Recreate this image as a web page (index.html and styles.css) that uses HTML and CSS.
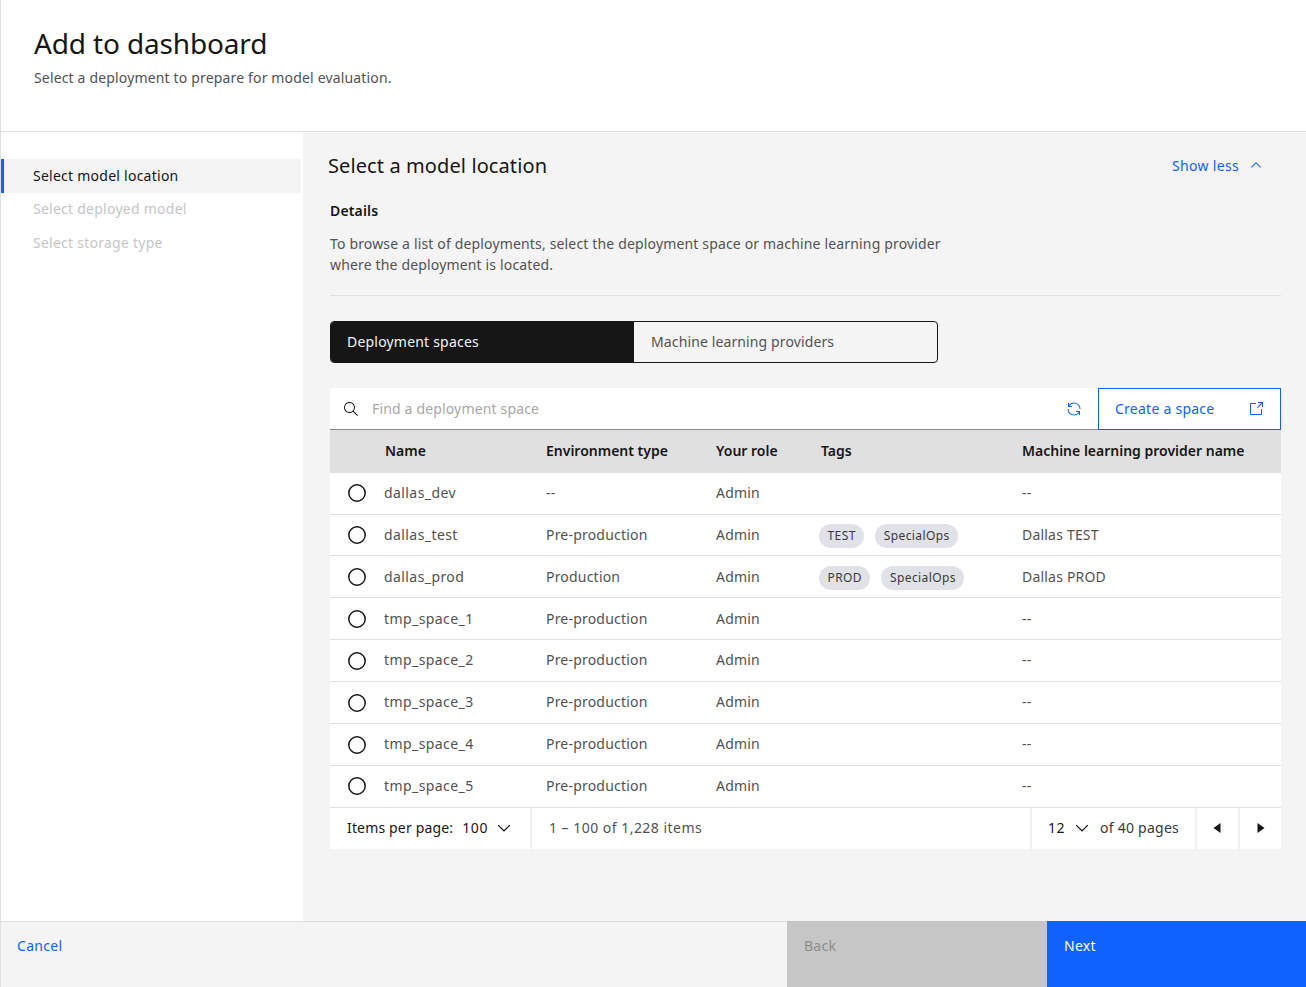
FILE: index.html
```html
<!DOCTYPE html>
<html lang="en">
<head>
<meta charset="utf-8">
<title>Add to dashboard</title>
<link rel="stylesheet" href="styles.css">
</head>
<body>
<div class="page">
  <header class="head">
    <h1 class="title">Add to dashboard</h1>
    <p class="subtitle">Select a deployment to prepare for model evaluation.</p>
  </header>
  <div class="body">
    <nav class="steps">
      <div class="step active">Select model location</div>
      <div class="step">Select deployed model</div>
      <div class="step">Select storage type</div>
    </nav>
    <main class="content">
      <div class="section-head">
        <h2 class="section-title">Select a model location</h2>
        <a class="show-less">Show less
          <svg class="icon" viewBox="0 0 16 16"><path d="M8 5l5 5-.7.7L8 6.4l-4.3 4.3L3 10z"/></svg>
        </a>
      </div>
      <div class="details">
        <h3 class="details-title">Details</h3>
        <p class="details-text">To browse a list of deployments, select the deployment space or machine learning provider where the deployment is located.</p>
      </div>
      <div class="switcher">
        <div class="switch on">Deployment spaces</div>
        <div class="switch">Machine learning providers</div>
      </div>
      <section class="table">
        <div class="toolbar">
          <svg class="icon search" viewBox="0 0 16 16"><path d="M15 14.3L10.7 10c1.9-2.3 1.6-5.8-.7-7.7S4.2.7 2.3 3 .7 8.8 3 10.7c2 1.7 5 1.7 7 0l4.3 4.3.7-.7zM2 6.5C2 4 4 2 6.5 2S11 4 11 6.5 9 11 6.5 11 2 9 2 6.5z"/></svg>
          <span class="placeholder">Find a deployment space</span>
          <svg class="icon renew" viewBox="0 0 32 32"><path d="M12 10H6.78A11 11 0 0 1 27 16h2A13 13 0 0 0 6 7.68V4H4v8h8z"/><path d="M20 22h5.22A11 11 0 0 1 5 16H3a13 13 0 0 0 23 8.32V28h2v-8h-8z"/></svg>
          <a class="create">Create a space
            <svg class="icon" viewBox="0 0 16 16"><path d="M13 14H3c-.6 0-1-.4-1-1V3c0-.6.4-1 1-1h5v1H3v10h10V8h1v5c0 .6-.4 1-1 1z"/><path d="M10 1v1h3.3L9 6.3l.7.7L14 2.7V6h1V1z"/></svg>
          </a>
        </div>
        <div class="row header">
          <div></div><div class="head-name">Name</div><div>Environment type</div><div>Your role</div><div>Tags</div><div>Machine learning provider name</div>
        </div>
        <div class="row"><div class="cell-radio"><svg class="radio" viewBox="0 0 18 18"><circle cx="9" cy="9" r="8.2"/></svg></div><div class="cell-name">dallas_dev</div><div>--</div><div>Admin</div><div></div><div>--</div></div>
        <div class="row"><div class="cell-radio"><svg class="radio" viewBox="0 0 18 18"><circle cx="9" cy="9" r="8.2"/></svg></div><div class="cell-name">dallas_test</div><div>Pre-production</div><div>Admin</div><div class="tags"><span class="tag">TEST</span><span class="tag">SpecialOps</span></div><div>Dallas TEST</div></div>
        <div class="row"><div class="cell-radio"><svg class="radio" viewBox="0 0 18 18"><circle cx="9" cy="9" r="8.2"/></svg></div><div class="cell-name">dallas_prod</div><div>Production</div><div>Admin</div><div class="tags"><span class="tag">PROD</span><span class="tag">SpecialOps</span></div><div>Dallas PROD</div></div>
        <div class="row"><div class="cell-radio"><svg class="radio" viewBox="0 0 18 18"><circle cx="9" cy="9" r="8.2"/></svg></div><div class="cell-name">tmp_space_1</div><div>Pre-production</div><div>Admin</div><div></div><div>--</div></div>
        <div class="row"><div class="cell-radio"><svg class="radio" viewBox="0 0 18 18"><circle cx="9" cy="9" r="8.2"/></svg></div><div class="cell-name">tmp_space_2</div><div>Pre-production</div><div>Admin</div><div></div><div>--</div></div>
        <div class="row"><div class="cell-radio"><svg class="radio" viewBox="0 0 18 18"><circle cx="9" cy="9" r="8.2"/></svg></div><div class="cell-name">tmp_space_3</div><div>Pre-production</div><div>Admin</div><div></div><div>--</div></div>
        <div class="row"><div class="cell-radio"><svg class="radio" viewBox="0 0 18 18"><circle cx="9" cy="9" r="8.2"/></svg></div><div class="cell-name">tmp_space_4</div><div>Pre-production</div><div>Admin</div><div></div><div>--</div></div>
        <div class="row"><div class="cell-radio"><svg class="radio" viewBox="0 0 18 18"><circle cx="9" cy="9" r="8.2"/></svg></div><div class="cell-name">tmp_space_5</div><div>Pre-production</div><div>Admin</div><div></div><div>--</div></div>
        <div class="pager">
          <div class="pager-size"><span>Items per page:</span><span class="val">100</span><svg class="chev" viewBox="0 0 16 16"><path d="M8 11L3 6l.7-.7L8 9.6l4.3-4.3L13 6z"/></svg></div>
          <div class="pager-range">1 – 100 of 1,228 items</div>
          <div class="pager-page"><span class="num">12</span><svg class="chev" viewBox="0 0 16 16"><path d="M8 11L3 6l.7-.7L8 9.6l4.3-4.3L13 6z"/></svg><span class="of">of 40 pages</span></div>
          <div class="pager-btn prev"><svg class="icon" viewBox="0 0 16 16"><path d="M11.5 3v10L4.5 8z"/></svg></div>
          <div class="pager-btn"><svg class="icon" viewBox="0 0 16 16"><path d="M4.5 3v10l7-5z"/></svg></div>
        </div>
      </section>
    </main>
  </div>
  <footer class="foot">
    <a class="cancel">Cancel</a>
    <div class="btn back">Back</div>
    <div class="btn next">Next</div>
  </footer>
</div>
</body>
</html>
```
FILE: styles.css
```css
* { box-sizing: border-box; }
html, body { margin: 0; padding: 0; }
body { font-family: "Noto Sans", "Open Sans", sans-serif; font-size: 14px; color: #161616; background: #fff; }
.page { width: 1306px; height: 987px; display: flex; flex-direction: column; overflow: hidden; border-left: 1px solid #e0e0e0; }
.icon { width: 16px; height: 16px; fill: currentColor; flex: none; }
.chev { width: 20px; height: 20px; fill: #161616; flex: none; }

.head { height: 132px; padding: 25px 0 0 33px; border-bottom: 1px solid #e0e0e0; flex: none; }
.title { margin: 0; font-size: 28px; line-height: 36px; font-weight: 400; letter-spacing: -.15px; }
.subtitle { margin: 7px 0 0; font-size: 14px; line-height: 20px; color: #525252; letter-spacing: .16px; }

.body { flex: 1; display: flex; min-height: 0; }
.steps { width: 302px; flex: none; padding-top: 27px; }
.step { height: 33.5px; line-height: 32px; padding-left: 32px; color: #c6c6c6; width: 300px; letter-spacing: .25px; }
.step.active { height: 34px; line-height: 33px; color: #161616; background: #f4f4f4; border-left: 3px solid #0f62fe; padding-left: 29px; }
.step.active + .step + .step { line-height: 31px; }

.content { flex: 1; background: #f4f4f4; padding: 0 25px 0 27px; min-width: 0; }
.section-head { display: flex; justify-content: space-between; align-items: center; height: 68px; padding: 0 17px 2px 0; margin-left: -2px; }
.section-title { margin: 0 0 -2px; font-size: 20px; font-weight: 400; line-height: 28px; letter-spacing: .1px; }
.show-less { color: #0f62fe; display: flex; align-items: center; gap: 9px; letter-spacing: .32px; }
.details { border-bottom: 1px solid #e0e0e0; height: 96px; padding-top: 1px; }
.details-title { margin: 0; font-size: 14px; font-weight: 600; line-height: 20px; letter-spacing: .16px; }
.details-text { margin: 12px 0 0; width: 620px; line-height: 21px; color: #525252; letter-spacing: .16px; }

.switcher { display: flex; width: 608px; height: 42px; margin-top: 25px; border: 1px solid #161616; border-radius: 4px; overflow: hidden; }
.switch { flex: 1; padding-left: 17px; line-height: 40px; color: #525252; letter-spacing: .12px; }
.switch.on { flex: none; width: 303px; padding-left: 16px; background: #161616; color: #f4f4f4; letter-spacing: .2px; }

.table { margin-top: 25px; width: 951px; background: #fff; }
.toolbar { height: 42px; display: flex; align-items: center; border-bottom: 1px solid #8d8d8d; padding-left: 13px; }
.search { color: #161616; }
.placeholder { margin-left: 13px; flex: 1; color: #a8a8a8; letter-spacing: .16px; }
.renew { color: #0f62fe; margin-right: 16px; }
.create { width: 183px; height: 42px; border: 1px solid #0f62fe; color: #0f62fe; display: flex; align-items: center; justify-content: space-between; padding: 0 16px; flex: none; letter-spacing: .25px; }

.row { display: grid; grid-template-columns: 54px 162px 170px 105px 201px 259px; height: 41.85px; padding-bottom: 1.5px; align-items: center; color: #525252; border-bottom: 1px solid #e0e0e0; letter-spacing: .2px; }
.row.header { height: 42.8px; background: #e0e0e0; color: #161616; font-weight: 600; border-bottom: 0; letter-spacing: 0; }
.head-name { padding-left: 1px; }
.cell-name { letter-spacing: .42px; }
.cell-radio { display: flex; padding: 2px 0 0 18px; }
.radio { width: 18px; height: 18px; fill: none; stroke: #161616; stroke-width: 1.5; }
.tags { display: flex; gap: 11px; margin: 4px 0 0 -2px; }
.tag { height: 24px; line-height: 24px; padding: 0 8.5px; border-radius: 12px; background: #e0e2e7; color: #393939; font-size: 12px; letter-spacing: .4px; }

.pager { height: 41.4px; display: flex; align-items: stretch; color: #161616; }
.pager > div { display: flex; align-items: center; padding-bottom: 1px; }
.pager-size { width: 200px; padding-left: 17px; letter-spacing: .16px; }
.val { margin: 0 6px 0 9px; letter-spacing: .6px; }
.pager-range { flex: 1; padding-left: 17px; color: #525252; letter-spacing: .48px; border-left: 2px solid #f0f0f0; }
.pager-page { width: 165px; padding-left: 16px; gap: 7px; border-left: 2px solid #f0f0f0; }
.num { letter-spacing: .5px; }
.of { color: #393939; margin-left: 1px; letter-spacing: .25px; }
.pager-btn { width: 43px; justify-content: center; border-left: 2px solid #f0f0f0; }
.pager > .prev { padding-right: 2px; }

.foot { height: 66px; flex: none; display: flex; background: #f4f4f4; border-top: 1px solid #e0e0e0; }
.cancel { width: 786px; padding: 14px 0 0 16px; color: #0f62fe; line-height: 20px; letter-spacing: .3px; }
.btn { margin-top: -1px; padding: 15px 0 0 17px; line-height: 20px; letter-spacing: .25px; }
.back { width: 260px; background: #c6c6c6; color: #8d8d8d; }
.next { width: 259px; background: #0f62fe; color: #fff; }
```
